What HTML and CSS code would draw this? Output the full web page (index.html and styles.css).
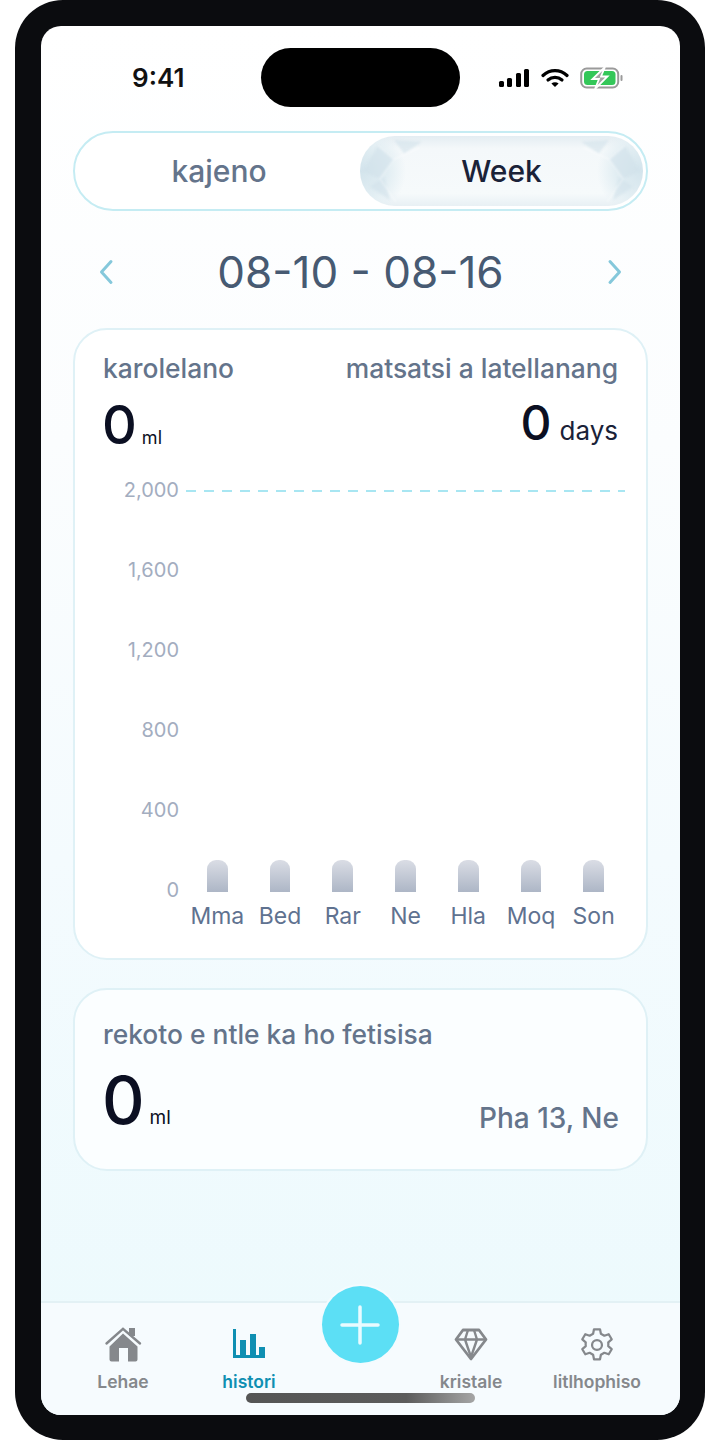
FILE: index.html
```html
<!DOCTYPE html>
<html lang="en">
<head>
    <meta charset="UTF-8">
    <meta name="viewport" content="width=device-width, initial-scale=1.0">
    <title>Histori</title>
    <link rel="stylesheet" href="styles.css">
</head>
<body>
    <div class="phone">
        <div class="screen">
            <div class="status">
                <span class="time">9:41</span>
                <div class="island"></div>
                <div class="status-icons">
                    <svg width="32" height="20" viewBox="0 0 32 20"><rect x="1" y="13" width="5" height="6" rx="1.5"/><rect x="9" y="10" width="5" height="9" rx="1.5"/><rect x="18" y="5" width="5" height="14" rx="1.5"/><rect x="26" y="1" width="5" height="18" rx="1.5"/></svg>
                    <svg width="28" height="20" viewBox="0 0 28 20" fill="none" stroke="#000" stroke-width="3.2" stroke-linecap="round"><path d="M2 7.5C9 1 19 1 26 7.5"/><path d="M7 12C11 8.5 17 8.5 21 12"/><path d="M14 19l-3.6-3.6c2-1.600 5.200-1.600 7.200 0z" fill="#000" stroke="none"/></svg>
                    <svg width="44" height="22" viewBox="0 0 44 22"><rect x="1.200" y="1.500" width="37" height="19" rx="5.500" fill="none" stroke="#9a9a9a" stroke-width="2"/><rect x="4" y="4" width="31.500" height="14" rx="3.500" fill="#34c759"/><rect x="40.500" y="8" width="2" height="6" rx="1" fill="#9a9a9a"/><path d="M25 0L12.500 12h6.500L15 22 27.500 9.500h-6.500z" fill="#a3a3a3" stroke="#fff" stroke-width="1.800"/></svg>
                </div>
            </div>

            <div class="toggle">
                <div class="toggle-tab">kajeno</div>
                <div class="toggle-tab toggle-active">
                    <svg class="crystal" viewBox="0 0 283 72" preserveAspectRatio="none">
                        <g fill="#cfe1ea" opacity=".55">
                            <path d="M3 36L18 10L34 24L20 44z"/>
                            <path d="M10 52L24 42L30 66z"/>
                            <path d="M280 36L265 10L249 24L263 44z"/>
                            <path d="M273 52L259 42L253 66z"/>
                            <path d="M34 4L62 6L44 18z"/>
                            <path d="M249 4L221 6L239 18z"/>
                        </g>
                        <g fill="none" stroke="#fff" stroke-width="1" opacity=".7">
                            <path d="M18 10L34 24L20 44L36 68M34 24L60 12M265 10L249 24L263 44L247 68M249 24L223 12"/>
                        </g>
                    </svg>
                    <span class="toggle-label">Week</span>
                </div>
            </div>

            <div class="date-row">
                <svg class="chev" width="16" height="26" viewBox="0 0 16 26"><path d="M13 2.500L3.500 13L13 23.500"/></svg>
                <span class="date">08-10 - 08-16</span>
                <svg class="chev" width="16" height="26" viewBox="0 0 16 26"><path d="M3 2.500L12.500 13L3 23.500"/></svg>
            </div>

            <section class="card card-chart">
                <div class="card-head">
                    <span class="card-title">karolelano</span>
                    <span class="card-title">matsatsi a latellanang</span>
                </div>
                <div class="totals">
                    <div class="total-main"><span class="num">0</span><span class="unit">ml</span></div>
                    <div class="total-side"><span class="num num-small">0</span><span class="unit unit-big">days</span></div>
                </div>

                <div class="chart">
                    <div class="y-axis">
                        <span>2,000</span>
                        <span>1,600</span>
                        <span>1,200</span>
                        <span>800</span>
                        <span>400</span>
                        <span>0</span>
                    </div>
                    <div class="plot">
                        <div class="goal"></div>
                        <div class="bars">
                            <div class="bar"></div>
                            <div class="bar"></div>
                            <div class="bar"></div>
                            <div class="bar"></div>
                            <div class="bar"></div>
                            <div class="bar"></div>
                            <div class="bar"></div>
                        </div>
                        <div class="days">
                            <span>Mma</span>
                            <span>Bed</span>
                            <span>Rar</span>
                            <span>Ne</span>
                            <span>Hla</span>
                            <span>Moq</span>
                            <span>Son</span>
                        </div>
                    </div>
                </div>
            </section>

            <section class="card card-last">
                <div class="card-title">rekoto e ntle ka ho fetisisa</div>
                <div class="totals totals-last">
                    <div><span class="num num-big">0</span><span class="unit unit-small">ml</span></div>
                    <span class="last-date">Pha 13, Ne</span>
                </div>
            </section>

            <nav class="tabbar">
                <div class="tab">
                    <svg width="38" height="36" viewBox="0 0 38 36"><path d="M5.500 19.500L19 6.500L33.500 19.500V32.500a2 2 0 0 1-2 2H24V21H15V34.500H7.500a2 2 0 0 1-2-2z" fill="#85888c"/><path d="M2.500 16.500L19 1.800L36 16.500" fill="none" stroke="#85888c" stroke-width="2.400" stroke-linecap="round"/><rect x="25" y="1" width="6" height="8" fill="#85888c"/></svg>
                    <span>Lehae</span>
                </div>
                <div class="tab tab-active">
                    <svg width="34" height="36" viewBox="0 0 34 36" fill="#0f8fb2"><rect x="1" y="2" width="3" height="29"/><rect x="1" y="28" width="32" height="3"/><rect x="8" y="13" width="6" height="16"/><rect x="18" y="7" width="6" height="22"/><rect x="27" y="20" width="6" height="9"/></svg>
                    <span>histori</span>
                </div>
                <div class="fab-slot">
                    <div class="fab">
                        <svg width="42" height="42" viewBox="0 0 42 42"><path d="M21 3V39M3 21H39" stroke="#e9fbff" stroke-width="3.500" stroke-linecap="round"/></svg>
                    </div>
                </div>
                <div class="tab">
                    <svg width="34" height="36" viewBox="0 0 34 36" fill="none" stroke="#85888c" stroke-width="2.800" stroke-linejoin="round"><path d="M9 3H25L32 12.500L17 32L2 12.500z"/><path d="M2 12.500H32M11 12.500L17 30L23 12.500M11 12.500L14 3M23 12.500L20 3" stroke-width="2.400"/></svg>
                    <span>kristale</span>
                </div>
                <div class="tab">
                    <svg width="36" height="36" viewBox="0 0 24 24" fill="none" stroke="#85888c" stroke-width="1.500" stroke-linejoin="round"><path d="M10 1.500h4l.6 3 2.300 1.300 2.900-1 2 3.400-2.300 2c.1.900.1 1.700 0 2.600l2.300 2-2 3.400-2.900-1-2.300 1.300-.6 3h-4l-.6-3-2.300-1.300-2.900 1-2-3.400 2.300-2a10 10 0 0 1 0-2.600l-2.300-2 2-3.400 2.900 1 2.300-1.300z"/><circle cx="12" cy="12" r="3.300"/></svg>
                    <span>litlhophiso</span>
                </div>
            </nav>
            <div class="home-bar"></div>
        </div>
    </div>
</body>
</html>
```

FILE: styles.css
```css
* {
    box-sizing: border-box;
}

body {
    margin: 0;
    background: #fff;
    font-family: Inter, "Liberation Sans", sans-serif;
}

.phone {
    width: 690px;
    height: 1440px;
    margin-left: 15px;
    padding: 26px 25px 25px 26px;
    background: #0b0c0f;
    border-radius: 48px;
}

.screen {
    position: relative;
    display: flex;
    flex-direction: column;
    height: 100%;
    border-radius: 20px;
    overflow: hidden;
    background: linear-gradient(180deg, #fff 0%, #fbfdfe 30%, #f4fbfe 60%, #edfafd 93%);
}

/* status bar */
.status {
    display: flex;
    align-items: center;
    height: 59px;
    margin-top: 22px;
    padding-left: 91px;
}

.time {
    width: 129px;
    font-size: 26px;
    font-weight: 600;
    color: #111;
}

.island {
    width: 199px;
    height: 59px;
    border-radius: 30px;
    background: #000;
}

.status-icons {
    display: flex;
    align-items: center;
    gap: 11px;
    margin-left: 38px;
}

/* toggle */
.toggle {
    display: flex;
    height: 80px;
    margin: 24px 32px 0;
    padding: 3px;
    border: 2px solid #c5ecf3;
    border-radius: 40px;
    background: #fff;
}

.toggle-tab {
    position: relative;
    display: flex;
    flex: 1;
    align-items: center;
    justify-content: center;
    font-size: 30px;
    font-weight: 500;
    color: #64748b;
}

.toggle-active {
    flex: none;
    width: 283px;
    border-radius: 36px;
    overflow: hidden;
    color: #1a2238;
    background:
        radial-gradient(ellipse 46px 46px at 0% 50%, #d3e4ec 0%, #e2eef3 60%, transparent 100%),
        radial-gradient(ellipse 46px 46px at 100% 50%, #d3e4ec 0%, #e2eef3 60%, transparent 100%),
        linear-gradient(180deg, #e4edf2 0%, #f4f8fa 18%, #f6fafb 82%, #e8f0f4 100%);
}

.crystal {
    position: absolute;
    inset: 0;
    width: 100%;
    height: 100%;
    filter: blur(1px);
}

.toggle-label {
    position: relative;
}

/* date */
.date-row {
    display: flex;
    align-items: center;
    justify-content: space-between;
    height: 60px;
    margin: 31px 57px 0;
}

.date {
    font-size: 44px;
    font-weight: 400;
    color: #475a72;
}

.chev {
    fill: none;
    stroke: #85c8db;
    stroke-width: 3;
    stroke-linecap: round;
    stroke-linejoin: round;
}

/* cards */
.card {
    margin: 0 32px;
    border: 2px solid #dff1f6;
    border-radius: 34px;
    background: #fff;
}

.card-chart {
    height: 632px;
    margin-top: 26px;
    padding: 20px 28px 0;
}

.card-last {
    height: 183px;
    margin-top: 28px;
    padding: 26px 28px 0;
    background: #fbfeff;
}

.card-head,
.totals {
    display: flex;
    justify-content: space-between;
}

.card-title {
    font-size: 26.4px;
    font-weight: 500;
    line-height: 36px;
    color: #64748b;
}

.totals {
    margin-top: 4px;
    line-height: 62px;
    color: #0b0f22;
}

.totals-last {
    align-items: baseline;
    margin-top: 17px;
}

.total-main {
    margin-top: 4px;
}

.total-side {
    margin-top: 2px;
}

.num {
    margin-left: -1px;
    font-size: 54px;
    font-weight: 500;
}

.num-small {
    font-size: 48px;
}

.num-big {
    font-size: 66px;
}

.unit {
    margin-left: 5px;
    font-size: 18px;
}

.unit-big {
    margin-left: 8px;
    font-size: 26px;
    color: #1a2238;
}

.unit-small {
    font-size: 19px;
}

.last-date {
    align-self: flex-end;
    margin-bottom: 17px;
    margin-right: -1px;
    font-size: 28px;
    font-weight: 500;
    line-height: 28px;
    color: #64748b;
}

/* chart */
.chart {
    display: flex;
    margin-top: 9px;
}

.y-axis {
    display: flex;
    flex: none;
    flex-direction: column;
    justify-content: space-between;
    width: 76px;
    height: 424px;
    font-size: 20px;
    line-height: 24px;
    text-align: right;
    color: #a3adbf;
}

.plot {
    position: relative;
    display: flex;
    flex: none;
    flex-direction: column;
    width: 439px;
    margin-left: 7px;
}

.goal {
    position: absolute;
    top: 12px;
    left: 0;
    right: 0;
    height: 2px;
    background: repeating-linear-gradient(90deg, #a8e6f2 0 10px, transparent 10px 18px);
}

.bars {
    display: flex;
    align-items: flex-end;
    height: 414px;
}

.bar {
    flex: 1;
    height: 32px;
    margin: 0 21px;
    border-radius: 9px 9px 0 0;
    background: linear-gradient(180deg, #dadde5 0%, #adb6c6 100%);
}

.days {
    display: flex;
    margin-top: 8px;
    font-size: 23px;
    line-height: 32px;
    color: #5f7290;
}

.days span {
    flex: 1;
    text-align: center;
    white-space: nowrap;
}

/* bottom tabs */
.tabbar {
    position: absolute;
    left: 0;
    right: 0;
    bottom: 0;
    display: flex;
    height: 114px;
    padding: 24px 20px 0 19px;
    border-top: 2px solid #e3f1f5;
    background: #f6fbfe;
}

.tab {
    display: flex;
    flex-direction: column;
    align-items: center;
    width: 126px;
    font-size: 17.5px;
    font-weight: 600;
    color: #85888c;
}

.tab span {
    margin-top: 8px;
}

.tab-active {
    color: #0f8fb2;
}

.fab-slot {
    flex: 1;
    display: flex;
    justify-content: center;
}

.fab {
    display: flex;
    align-items: center;
    justify-content: center;
    flex: none;
    width: 77px;
    height: 77px;
    margin-top: -41px;
    border-radius: 50%;
    background: #5cdff5;
    box-shadow: 0 0 0 2px #f4fbfe;
}

.home-bar {
    position: absolute;
    left: 205px;
    bottom: 12px;
    width: 229px;
    height: 10px;
    border-radius: 5px;
    background: linear-gradient(90deg, #555 0%, #5c5c5c 70%, #a5a5a5 100%);
}
```
